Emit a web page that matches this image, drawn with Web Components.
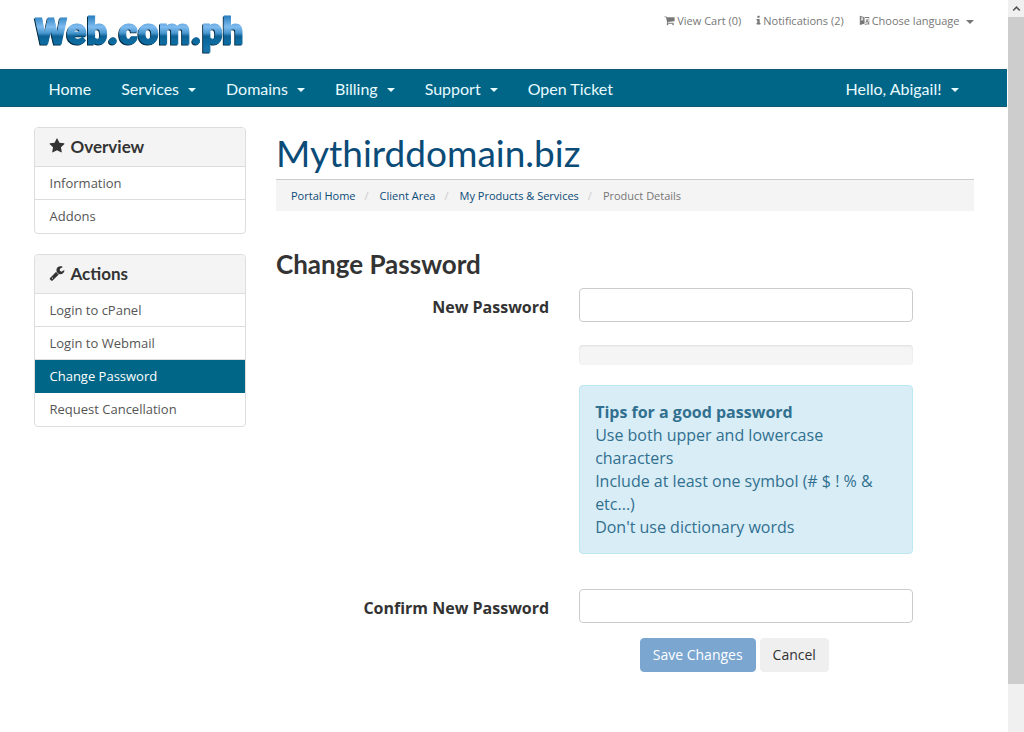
<!DOCTYPE html>
<html lang="en">
<head>
<meta charset="utf-8">
<meta name="viewport" content="width=device-width, initial-scale=1">
<title>Web.com.ph - Client Area</title>
<style>
    body {
        margin: 0;
        background: #fff;
        color: #333;
        font-family: "Open Sans", sans-serif;
        font-size: 16px;
        --brand: #006687;
        --link: #0a4b78;
        --heading: Lato, sans-serif;
    }
</style>
</head>
<body>
<client-page>
    <site-header slot="header"></site-header>
    <main-nav slot="nav"></main-nav>

    <side-panel slot="side" heading="Overview" icon="star">
        <a href="#info">Information</a>
        <a href="#addons">Addons</a>
    </side-panel>
    <side-panel slot="side" heading="Actions" icon="wrench">
        <a href="#cpanel">Login to cPanel</a>
        <a href="#webmail">Login to Webmail</a>
        <a href="#password" class="active">Change Password</a>
        <a href="#cancel">Request Cancellation</a>
    </side-panel>

    <page-heading>
        Mythirddomain.biz
        <a slot="crumb" href="#home">Portal Home</a>
        <a slot="crumb" href="#area">Client Area</a>
        <a slot="crumb" href="#products">My Products &amp; Services</a>
        <span slot="crumb">Product Details</span>
    </page-heading>
    <password-form></password-form>
</client-page>

<script>
// Icon shapes, all on a 1792 grid
const ICONS = {
    star: 'M1728 647q0 22-26 48l-363 354 86 500q1 7 1 20 0 21-10.5 35.5t-30.5 14.5q-19 0-40-12l-449-236-449 236q-22 12-40 12-21 0-31.5-14.5t-10.5-35.5q0-6 2-20l86-500-364-354q-25-27-25-48 0-37 56-46l502-73 225-455q19-41 49-41t49 41l225 455 502 73q56 9 56 46z',
    wrench: 'M448 1472q0-26-19-45t-45-19-45 19-19 45 19 45 45 19 45-19 19-45zm644-420l-682 682q-37 37-90 37-52 0-91-37l-106-108q-38-36-38-90 0-53 38-91l681-681q39 98 114.5 173.5t173.5 114.5zm634-435q0 39-23 106-47 134-164.5 217.5t-258.5 83.5q-185 0-316.5-131.5t-131.5-316.5 131.5-316.5 316.5-131.5q58 0 121.5 16.5t107.5 46.5q16 11 16 28t-16 28l-293 169v224l193 107q5-3 79-48.5t135.5-81 70.5-35.5q15 0 23.5 10t8.5 25z',
    cart: 'M704 1536q0 52-38 90t-90 38-90-38-38-90 38-90 90-38 90 38 38 90zm896 0q0 52-38 90t-90 38-90-38-38-90 38-90 90-38 90 38 38 90zm128-1088v512q0 24-16.5 42.5t-40.5 21.5l-1044 122q13 60 13 70 0 16-24 64h920q26 0 45 19t19 45-19 45-45 19h-1024q-26 0-45-19t-19-45q0-11 8-31.5t16-36 21.5-40 15.5-29.5l-177-823h-204q-26 0-45-19t-19-45 19-45 45-19h256q16 0 28.5 6.5t19.5 15.5 13 24.5 8 26 5.5 29.5 4.5 26h1201q26 0 45 19t19 45z',
    info: 'M1216 1344v128q0 26-19 45t-45 19h-512q-26 0-45-19t-19-45v-128q0-26 19-45t45-19h64v-384h-64q-26 0-45-19t-19-45v-128q0-26 19-45t45-19h384q26 0 45 19t19 45v576h64q26 0 45 19t19 45zm-128-1152v192q0 26-19 45t-45 19h-256q-26 0-45-19t-19-45v-192q0-26 19-45t45-19h256q26 0 45 19t19 45z',
    language: 'M128 128l780 220v1080l-780 220zM270 420v110h190q-30 180-210 330l70 90q120-100 190-220 60 90 150 150l60-100q-90-60-150-150 30-60 40-100h90V420zM980 340h680v1240l-280-90-440 140v-130l380-130h160l-60-200h-210l-60 170h-120l220-680h130l200 680V480H980zM1310 830l-60 220h130z',
    up: 'M896 500l620 620-170 170-450-450-450 450-170-170z'
};

function define(name, html, setup) {
    customElements.define(name, class extends HTMLElement {
        constructor() {
            super();
            this.attachShadow({ mode: 'open' }).innerHTML = html;
        }
        connectedCallback() {
            if (setup) setup(this, this.shadowRoot);
        }
    });
}

// The slice keeps an icon at full height in a narrower box
define('ui-icon', `
    <style>
        :host { display: inline-block; flex: none; width: 1em; height: 1em; }
        svg { display: block; width: 100%; height: 100%; fill: currentColor; }
    </style>
    <svg viewBox="0 0 1792 1792" preserveAspectRatio="xMidYMid slice" aria-hidden="true"><path fill-rule="evenodd"/></svg>
`, (el, root) => {
    root.querySelector('path').setAttribute('d', ICONS[el.getAttribute('name')]);
});

define('ui-caret', `
    <style>
        :host {
            display: inline-block;
            margin-top: 3px;
            border: 4px solid transparent;
            border-top-color: currentColor;
            border-bottom: 0;
        }
    </style>
`);

// Decorative scroll rail on the right of the window
define('scroll-rail', `
    <style>
        :host {
            display: flex;
            flex-direction: column;
            position: sticky;
            top: 0;
            height: 100vh;
            border-left: 1px solid #fff;
            background: #f0f0f0;
        }
        .arrow { display: flex; justify-content: center; align-items: center; height: 17px; color: #505050; font-size: 11px; }
        .thumb { flex: 14; background: #cdcdcd; }
        .rest { flex: 1; }
    </style>
    <div class="arrow"><ui-icon name="up"></ui-icon></div>
    <div class="thumb"></div>
    <div class="rest"></div>
`);

define('client-page', `
    <style>
        :host { display: grid; grid-template-columns: minmax(0, 1fr) 17px; min-height: 100vh; }
        .columns { display: flex; max-width: 970px; margin: 20px auto 0; }
        aside, main { box-sizing: border-box; padding: 0 15px; }
        aside { width: 25%; display: flex; flex-direction: column; gap: 20px; }
        main { width: 75%; }
    </style>
    <div>
        <slot name="header"></slot>
        <slot name="nav"></slot>
        <div class="columns">
            <aside><slot name="side"></slot></aside>
            <main><slot></slot></main>
        </div>
    </div>
    <scroll-rail></scroll-rail>
`);

define('site-header', `
    <style>
        :host { display: block; }
        .inner {
            display: flex;
            justify-content: space-between;
            box-sizing: border-box;
            max-width: 970px;
            height: 69px;
            margin: 0 auto;
            padding: 11px 15px 0;
        }
        .logo svg { display: block; width: 214px; height: 44px; overflow: visible; }
        .logo text { font: 900 37px Roboto, sans-serif; }
        nav { display: flex; gap: 15px; height: 18px; font-size: 11px; }
        nav a { display: flex; align-items: center; gap: 2px; color: #777; text-decoration: none; }
        nav ui-caret { margin-left: 4px; }
        .narrow { width: 5px; }
    </style>
    <div class="inner">
        <a class="logo" href="#home" aria-label="Web.com.ph">
            <svg viewBox="0 0 214 44">
                <defs>
                    <linearGradient id="shine" gradientUnits="userSpaceOnUse" x1="0" y1="5" x2="0" y2="36">
                        <stop offset="0" stop-color="#2a7fc0"/>
                        <stop offset=".35" stop-color="#7fbcf0"/>
                        <stop offset=".55" stop-color="#4a98d0"/>
                        <stop offset=".65" stop-color="#0d6296"/>
                        <stop offset="1" stop-color="#1272a8"/>
                    </linearGradient>
                    <filter id="edge" x="-5%" y="-10%" width="110%" height="125%">
                        <feDropShadow dx="-1" dy="1" stdDeviation="0" flood-color="#062a42"/>
                    </filter>
                </defs>
                <text x="1" y="33" fill="url(#shine)" stroke="url(#shine)" stroke-width="1" filter="url(#edge)">Web.com.ph</text>
            </svg>
        </a>
        <nav>
            <a href="#cart"><ui-icon name="cart"></ui-icon>View Cart (0)</a>
            <a href="#notices"><ui-icon class="narrow" name="info"></ui-icon>Notifications (2)</a>
            <a href="#language"><ui-icon name="language"></ui-icon>Choose language <ui-caret></ui-caret></a>
        </nav>
    </div>
`);

define('main-nav', `
    <style>
        :host {
            display: block;
            background: var(--brand);
            border: solid #0a5876;
            border-width: 1px 0;
            font-family: var(--heading);
            font-size: 16px;
        }
        .inner { display: flex; box-sizing: border-box; max-width: 970px; height: 36px; margin: 0 auto; padding: 0 15px; }
        a { display: flex; align-items: center; gap: 9px; padding: 0 15px; color: #e8fbff; text-decoration: none; }
        .user { margin-left: auto; }
    </style>
    <nav class="inner">
        <a href="#home">Home</a>
        <a href="#services">Services <ui-caret></ui-caret></a>
        <a href="#domains">Domains <ui-caret></ui-caret></a>
        <a href="#billing">Billing <ui-caret></ui-caret></a>
        <a href="#support">Support <ui-caret></ui-caret></a>
        <a href="#ticket">Open Ticket</a>
        <a class="user" href="#account">Hello, Abigail! <ui-caret></ui-caret></a>
    </nav>
`);

define('side-panel', `
    <style>
        :host { display: block; border: 1px solid #ddd; border-radius: 4px; overflow: hidden; }
        h3 {
            display: flex;
            align-items: center;
            gap: 6px;
            box-sizing: border-box;
            height: 39px;
            margin: 0;
            padding: 0 14px 2px;
            background: #f4f4f4;
            border-bottom: 1px solid #ddd;
            font: bold 17px var(--heading);
        }
        ui-icon { font-size: 16px; }
        ::slotted(a) {
            display: block;
            box-sizing: border-box;
            height: 33px;
            padding: 0 15px;
            border-bottom: 1px solid #ddd;
            color: #555;
            font-size: 13px;
            line-height: 33px;
            text-decoration: none;
        }
        ::slotted(a:last-child) { border-bottom: 0; }
        ::slotted(a.active) { background: var(--brand); border-color: var(--brand); color: #fff; }
    </style>
    <h3><ui-icon></ui-icon><span></span></h3>
    <slot></slot>
`, (el, root) => {
    root.querySelector('span').textContent = el.getAttribute('heading');
    const icon = document.createElement('ui-icon');
    icon.setAttribute('name', el.getAttribute('icon'));
    root.querySelector('ui-icon').replaceWith(icon);
});

define('page-heading', `
    <style>
        :host { display: block; }
        h1 {
            margin: 0;
            color: var(--link);
            font: 400 37px/52px var(--heading);
            border-bottom: 1px solid #ccc;
        }
        nav { display: flex; align-items: center; height: 31px; padding: 0 15px; background: #f4f4f4; font-size: 11px; }
        ::slotted(a) { color: var(--link); text-decoration: none; }
        ::slotted(a)::after { content: "/"; padding: 0 11px 0 9px; color: #ccc; }
        ::slotted(span) { color: #777; }
    </style>
    <h1><slot></slot></h1>
    <nav aria-label="Breadcrumb"><slot name="crumb"></slot></nav>
`);

define('password-form', `
    <style>
        :host { display: block; margin-top: 36px; }
        h2 { margin: 0 0 6px; font: bold 26px/35px var(--heading); }
        form { margin: 0 -15px; }
        .row { display: grid; grid-template-columns: 5fr 6fr 1fr; margin-bottom: 15px; }
        .row > * { margin: 0 15px; }
        label { padding-top: 8px; font-weight: bold; line-height: 23px; text-align: right; }
        input {
            box-sizing: border-box;
            width: 100%;
            height: 34px;
            padding: 6px 12px;
            border: 1px solid #ccc;
            border-radius: 4px;
            font: inherit;
        }
        .strength { height: 20px; margin: 23px 0 20px; background: #f5f5f5; border-radius: 4px; box-shadow: inset 0 1px 2px #ddd; }
        .tips { margin-bottom: 20px; padding: 15px 15px 14px; background: #d9edf7; border: 1px solid #bce8f1; border-radius: 4px; color: #31708f; line-height: 23px; }
        .buttons { display: flex; gap: 4px; margin-left: 50%; padding-left: 15px; }
        button { height: 34px; padding: 0 12px 2px; border: 1px solid #efefef; border-radius: 4px; background: #efefef; color: #333; font: 14px "Open Sans", sans-serif; }
        .save { border-color: #7aa6d0; background: #7aa6d0; color: #fff; }
    </style>
    <h2>Change Password</h2>
    <form>
        <div class="row">
            <label for="new">New Password</label>
            <div>
                <input id="new" type="password" autocomplete="new-password">
                <div class="strength"></div>
                <div class="tips">
                    <strong>Tips for a good password</strong><br>
                    Use both upper and lowercase characters<br>
                    Include at least one symbol (# $ ! % &amp; etc...)<br>
                    Don't use dictionary words
                </div>
            </div>
        </div>
        <div class="row">
            <label for="confirm">Confirm New Password</label>
            <div><input id="confirm" type="password" autocomplete="new-password"></div>
        </div>
        <div class="buttons">
            <button class="save" type="submit" disabled>Save Changes</button>
            <button type="reset">Cancel</button>
        </div>
    </form>
`);
</script>
</body>
</html>
